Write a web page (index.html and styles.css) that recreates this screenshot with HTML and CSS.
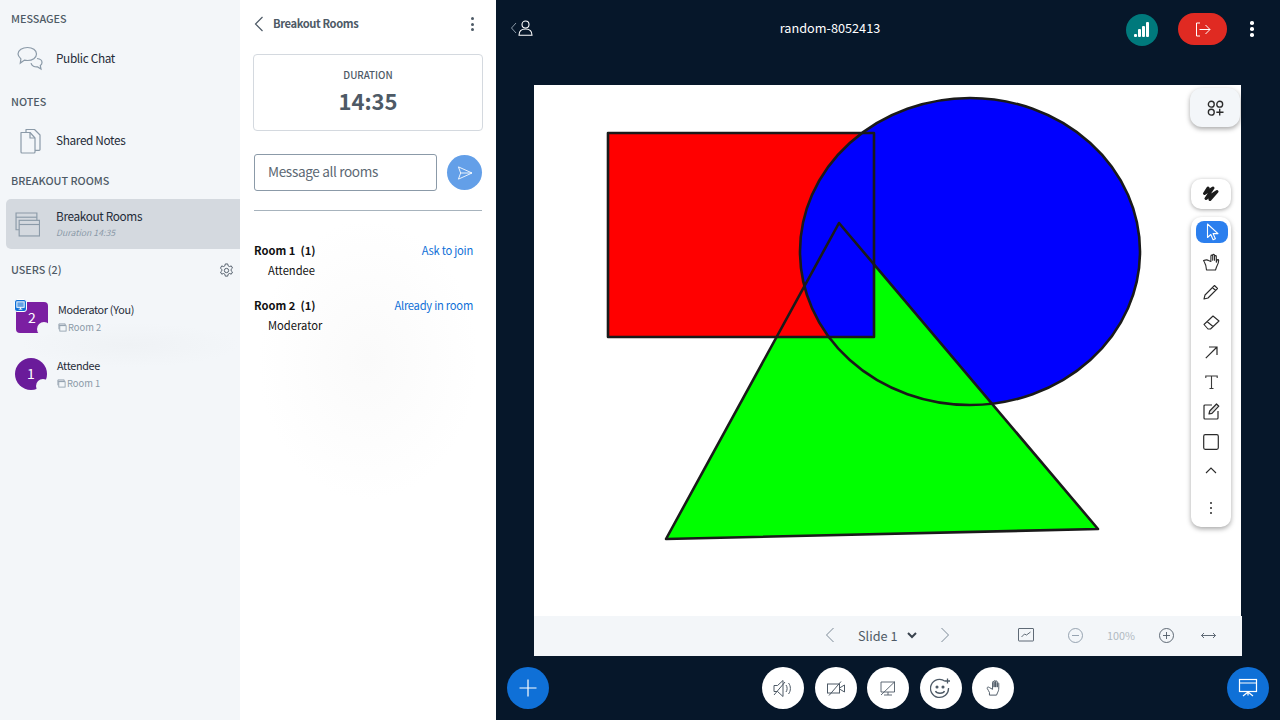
FILE: index.html
```html
<!DOCTYPE html>
<html lang="en">
<head>
    <meta charset="UTF-8">
    <meta name="viewport" content="width=device-width, initial-scale=1.0">
    <title>random-8052413</title>
    <link rel="stylesheet" href="styles.css">
</head>
<body>
    <aside class="sidebar">
        <h2 class="side-title">MESSAGES</h2>
        <div class="nav-item nav-chat">
            <svg class="nav-icon" viewBox="0 0 28 26" fill="none" stroke="#8b9aa8" stroke-width="1.2"><path d="M11.5 1.5c5 0 9 2.700 9 6.500s-4 6.500-9 6.500c-1 0-2-.1-3-.4l-4.200 3 .6-4.200C3 11 2 9.700 2 8c0-3.800 4.500-6.500 9.500-6.500z"/><path d="M21 12.500c3 .3 5 2 5 4 0 1.300-.6 2.300-1.700 3.100l.7 3.400-3.400-2.100c-2.900.4-6-1-6.600-3.700"/></svg>
            <span class="nav-text">Public Chat</span>
        </div>
        <h2 class="side-title title-notes">NOTES</h2>
        <div class="nav-item nav-notes">
            <svg class="nav-icon" viewBox="0 0 28 26" fill="none" stroke="#8b9aa8" stroke-width="1.200" stroke-linejoin="round"><path d="M5 4.500h9l5 5.500v14a1 1 0 0 1-1 1H6a1 1 0 0 1-1-1z"/><path d="M14 4.500V10h5"/><path d="M10 4V1.500h8.500L24 7v14.500a.8.8 0 0 1-.8.8H19"/></svg>
            <span class="nav-text">Shared Notes</span>
        </div>
        <h2 class="side-title title-breakout">BREAKOUT ROOMS</h2>
        <div class="nav-item nav-active">
            <svg class="nav-icon-wide" viewBox="0 0 24 24" fill="none" stroke="#8b9aa8" stroke-width="1.100"><path d="M4 17H1V1h20v7"/><path d="M1 5h20"/><rect x="4" y="8" width="19.500" height="15"/><path d="M4 12h19.500"/></svg>
            <div class="nav-text">
                <div>Breakout Rooms</div>
                <div class="nav-sub">Duration 14:35</div>
            </div>
        </div>
        <div class="users-head">
            <h2 class="side-title">USERS (2)</h2>
            <svg class="gear" viewBox="0 0 16 16" fill="none" stroke="#4e5a66" stroke-width="1"><circle cx="8" cy="8" r="2.300"/><path d="M6.700 1h2.600l.4 2 1.500.8 1.900-.7 1.300 2.300-1.500 1.300v1.600l1.500 1.300-1.300 2.300-1.900-.7-1.500.8-.4 2H6.700l-.4-2-1.500-.8-1.900.7-1.300-2.300 1.500-1.300V7.200L1.600 5.400l1.300-2.300 1.900.7 1.500-.8z"/></svg>
        </div>
        <div class="user user-mod">
            <div class="avatar avatar-square">2
                <span class="avatar-notch"></span>
                <span class="presenter-badge">
                    <svg viewBox="0 0 12 12" fill="none" stroke="#fff" stroke-width="1"><rect x="2" y="2" width="8" height="6" fill="#fff" fill-opacity=".35"/><path d="M4 10h4M6 8v2"/></svg>
                </span>
            </div>
            <div>
                <div class="user-name">Moderator (You)</div>
                <div class="user-room">
                    <svg viewBox="0 0 10 10" fill="none" stroke="#8b9aa8" stroke-width=".9"><path d="M1 7V1h7v2"/><rect x="2" y="3" width="7" height="6"/><path d="M1 2.500h7"/></svg>
                    Room 2
                </div>
            </div>
        </div>
        <div class="user user-att">
            <div class="avatar avatar-round">1
                <span class="avatar-notch"></span>
            </div>
            <div>
                <div class="user-name">Attendee</div>
                <div class="user-room">
                    <svg viewBox="0 0 10 10" fill="none" stroke="#8b9aa8" stroke-width=".9"><path d="M1 7V1h7v2"/><rect x="2" y="3" width="7" height="6"/><path d="M1 2.500h7"/></svg>
                    Room 1
                </div>
            </div>
        </div>
    </aside>

    <section class="panel">
        <div class="panel-head">
            <svg class="panel-back" viewBox="0 0 10 16" fill="none" stroke="#4e5a66" stroke-width="1.200"><path d="M8.500 1L1.500 8l7 7"/></svg>
            <span class="panel-title">Breakout Rooms</span>
            <span class="dots dots-dark"><i></i><i></i><i></i></span>
        </div>
        <div class="duration">
            <div class="duration-label">DURATION</div>
            <div class="duration-time">14:35</div>
        </div>
        <div class="message-row">
            <input class="message-input" type="text" placeholder="Message all rooms">
            <button class="send-btn">
                <svg viewBox="0 0 18 16" fill="none" stroke="#fff" stroke-width="1" stroke-linejoin="round"><path d="M1.500 1L17 8 1.500 15 4 8zM4 8h13"/></svg>
            </button>
        </div>
        <div class="room">
            <div class="room-line">
                <strong class="room-name">Room 1&nbsp; (1)</strong>
                <a class="room-link">Ask to join</a>
            </div>
            <div class="room-user">Attendee</div>
        </div>
        <div class="room">
            <div class="room-line">
                <strong class="room-name">Room 2&nbsp; (1)</strong>
                <a class="room-link">Already in room</a>
            </div>
            <div class="room-user">Moderator</div>
        </div>
    </section>

    <main class="main">
        <header class="topbar">
            <div class="top-left">
                <svg width="8" height="12" viewBox="0 0 8 12" fill="none" stroke="#8b9aa8" stroke-width="1"><path d="M6 1L1.500 6 6 11"/></svg>
                <svg width="15" height="16" viewBox="0 0 15 16" fill="none" stroke="#fff" stroke-width="1.100"><circle cx="7.500" cy="4.500" r="3.500"/><path d="M1 15.300c0-4 2-6.300 6.500-6.300s6.500 2.300 6.500 6.300z"/></svg>
            </div>
            <div class="meeting-name">random-8052413</div>
            <div class="top-right">
                <span class="signal"><i class="bar1"></i><i class="bar2"></i><i class="bar3"></i><i class="bar4"></i></span>
                <span class="leave">
                    <svg width="16" height="15" viewBox="0 0 16 15" fill="none" stroke="#fff" stroke-width="1"><path d="M5 1H1.500v13H5M4.500 7.500H15M10.500 3L15 7.500 10.500 12"/></svg>
                </span>
                <span class="dots dots-light"><i></i><i></i><i></i></span>
            </div>
        </header>

        <div class="stage">
            <div class="board">
                <svg class="drawing" viewBox="0 0 707 530" width="707" height="530">
                    <rect x="74" y="48" width="266" height="204" fill="#f00"/>
                    <ellipse cx="436" cy="166.500" rx="170" ry="153.500" fill="#00f"/>
                    <polygon points="340,179.400 564,444 132,454 242.600,252 340,252" fill="#0f0"/>
                    <g fill="none" stroke="#1a1a1a" stroke-width="2.600" stroke-linejoin="round">
                        <rect x="74" y="48" width="266" height="204"/>
                        <ellipse cx="436" cy="166.500" rx="170" ry="153.500"/>
                        <polygon points="305,138 564,444 132,454"/>
                    </g>
                </svg>
                <div class="tools">
                    <div class="tool-style">
                        <svg width="17" height="16" viewBox="0 0 20 19" fill="none" stroke="#2b2b2b" stroke-width="1.600"><circle cx="5" cy="5" r="3.500"/><circle cx="15" cy="5" r="3.500"/><circle cx="5" cy="14.500" r="3.500"/><path d="M15 10.500v8M11 14.500h8.500"/></svg>
                    </div>
                    <div class="tool-scribble">
                        <svg width="18" height="16" viewBox="0 0 18 16" fill="none" stroke="#1c1c1c" stroke-width="3" stroke-linecap="round" stroke-linejoin="round"><path d="M6 2L2.500 7.500 11 2 4 12.500 15 5.500 8 13.500"/></svg>
                    </div>
                    <div class="toolbar">
                        <div class="tool tool-active">
                            <svg width="13" height="18" viewBox="0 0 13 18" fill="none" stroke="#fff" stroke-width="1.100" stroke-linejoin="round"><path d="M1.500 1v13.500l3.300-3 2.300 5.300 2.300-1-2.300-5.200H12z"/></svg>
                        </div>
                        <div class="tool">
                            <svg width="18" height="18" viewBox="0 0 18 18" fill="none" stroke="#2b2b2b" stroke-width="1.100" stroke-linejoin="round"><path d="M4.500 17h9l1-3c1-2 2.200-4 2.200-6.500 0-1.200-1.500-1.200-1.800 0l-.6 1.800V3.500c0-1.200-1.600-1.200-1.800 0v3.800-5c0-1.300-1.700-1.300-1.800 0v5-4.300c0-1.200-1.700-1.200-1.800 0v5.500L6.500 7.500C5 6.300 3 7 1.500 7.500c1 1.500 1.500 3 2.300 5z"/></svg>
                        </div>
                        <div class="tool">
                            <svg width="16" height="16" viewBox="0 0 16 16" fill="none" stroke="#2b2b2b" stroke-width="1.100" stroke-linejoin="round"><path d="M1 15l1-4L11.500 1.500l3 3L5 14zM9.500 3.500l3 3"/></svg>
                        </div>
                        <div class="tool">
                            <svg width="17" height="15" viewBox="0 0 17 15" fill="none" stroke="#2b2b2b" stroke-width="1.100" stroke-linejoin="round"><path d="M1 9.500L10 1l6 5-8.500 8H5zM4 6.500l6 5"/></svg>
                        </div>
                        <div class="tool">
                            <svg width="13" height="13" viewBox="0 0 13 13" fill="none" stroke="#2b2b2b" stroke-width="1.200"><path d="M.8 12.200L12 1M4 1h8v8"/></svg>
                        </div>
                        <div class="tool">
                            <svg width="13" height="14" viewBox="0 0 13 14" fill="none" stroke="#3a3a3a" stroke-width="1.100"><path d="M.8 3V1h11.400v2M6.500 1v12.500M4.500 13.500h4"/></svg>
                        </div>
                        <div class="tool tool-up-1">
                            <svg width="17" height="17" viewBox="0 0 17 17" fill="none" stroke="#2b2b2b" stroke-width="1.200" stroke-linejoin="round"><path d="M9 2H2a1 1 0 0 0-1 1v12a1 1 0 0 0 1 1h12a1 1 0 0 0 1-1V8"/><path d="M6 11l.7-3L13.500 1l2.300 2.200L9 10.300z" fill="#2b2b2b" fill-opacity=".15"/></svg>
                        </div>
                        <div class="tool">
                            <svg width="16" height="16" viewBox="0 0 16 16" fill="none" stroke="#2b2b2b" stroke-width="1.200"><rect x=".7" y=".7" width="14.600" height="14.600" rx="1.500"/></svg>
                        </div>
                        <div class="tool tool-up-2">
                            <svg width="12" height="7" viewBox="0 0 12 7" fill="none" stroke="#2b2b2b" stroke-width="1.100"><path d="M1 6l5-5 5 5"/></svg>
                        </div>
                        <div class="tool tool-more"><span class="dots dots-small"><i></i><i></i><i></i></span></div>
                    </div>
                </div>
            </div>
            <div class="slidebar">
                <span class="sb-icon sb-prev">
                    <svg width="10" height="16" viewBox="0 0 10 16" fill="none" stroke="#7c8a97" stroke-width="1"><path d="M8.500 1L1.500 8l7 7"/></svg>
                </span>
                <span class="sb-slide">Slide 1
                    <svg width="10" height="7" viewBox="0 0 10 7" fill="none" stroke="#39434e" stroke-width="2"><path d="M1 1l4 4 4-4"/></svg>
                </span>
                <span class="sb-icon sb-next">
                    <svg width="10" height="16" viewBox="0 0 10 16" fill="none" stroke="#7c8a97" stroke-width="1"><path d="M1.500 1l7 7-7 7"/></svg>
                </span>
                <span class="sb-icon sb-chart">
                    <svg width="16" height="14" viewBox="0 0 16 14" fill="none" stroke="#4e5a66" stroke-width=".9"><rect x=".5" y=".5" width="15" height="12.500" rx=".5"/><path d="M3.500 9l3-3 2 1 4-3"/></svg>
                </span>
                <span class="sb-icon sb-minus">
                    <svg width="15" height="15" viewBox="0 0 15 15" fill="none" stroke="#8b9aa8" stroke-width=".9"><circle cx="7.500" cy="7.500" r="7"/><path d="M4 7.500h7"/></svg>
                </span>
                <span class="sb-zoom">100%</span>
                <span class="sb-icon sb-plus">
                    <svg width="15" height="15" viewBox="0 0 15 15" fill="none" stroke="#4e5a66" stroke-width=".9"><circle cx="7.500" cy="7.500" r="7"/><path d="M4 7.500h7M7.500 4v7"/></svg>
                </span>
                <span class="sb-icon sb-fit">
                    <svg width="15" height="7" viewBox="0 0 15 7" fill="none" stroke="#4e5a66" stroke-width=".9"><path d="M.5 3.500h14M3 1L.5 3.500 3 6M12 1l2.500 2.500L12 6"/></svg>
                </span>
            </div>
        </div>

        <footer class="actions">
            <button class="round-btn blue-btn">
                <svg width="18" height="18" viewBox="0 0 18 18" stroke="#fff" stroke-width="1.200"><path d="M.5 9h17M9 .5v17"/></svg>
            </button>
            <div class="action-group">
                <button class="round-btn">
                    <svg width="20" height="19" viewBox="0 0 20 19" fill="none" stroke="#4e5a66" stroke-width="1"><path d="M1 6.500h3.500L10 1.500v16l-5.500-5H1zM1 16L12 3M13 6c1.500 2 1.500 5 0 7M15.500 4c2.500 3 2.500 8 0 11"/></svg>
                </button>
                <button class="round-btn">
                    <svg width="18" height="15" viewBox="0 0 18 15" fill="none" stroke="#4e5a66" stroke-width="1"><rect x=".5" y="3" width="12" height="9"/><path d="M12.500 7l5-3v7l-5-3M2 14.500L14 .5"/></svg>
                </button>
                <button class="round-btn">
                    <svg width="16" height="15" viewBox="0 0 16 15" fill="none" stroke="#4e5a66" stroke-width=".9"><path d="M1 1h13.500v10H1zM4 14h8M8 11v3M1 14L15 .5"/></svg>
                </button>
                <button class="round-btn">
                    <svg width="21" height="21" viewBox="0 0 21 21" fill="none" stroke="#4e5a66" stroke-width="1.300"><path d="M15 3.300A9 9 0 1 0 18.500 10"/><circle cx="7" cy="9" r=".9" fill="#4e5a66"/><circle cx="13" cy="9" r=".9" fill="#4e5a66"/><path d="M5.500 13c1 3 8 3 9 0M17.500 .5v5M15 3h5"/></svg>
                </button>
                <button class="round-btn">
                    <svg width="16" height="18" viewBox="0 0 18 18" fill="none" stroke="#4e5a66" stroke-width="1.100" stroke-linejoin="round"><path d="M5 17h8l1-2.500c.8-1.500 1.500-3 1.500-5.500V4c0-1-1.500-1-1.700 0v4-6c0-1.200-1.700-1.200-1.800 0v6V1.500c0-1.200-1.800-1.200-1.800 0V8 2.500c0-1.200-1.700-1.200-1.700 0v8L5 8.500C3.500 7.300 2 8.300 2.500 9.500c1 1.300 1.500 3 2.500 4.500z"/></svg>
                </button>
            </div>
            <button class="round-btn blue-btn push-right">
                <svg width="20" height="20" viewBox="0 0 20 20" fill="none" stroke="#fff" stroke-width="1.200"><rect x="1.500" y="1.500" width="17" height="12"/><path d="M1.500 5h17M10 13.500v4M10 14l-5 4M10 14l5 4"/></svg>
            </button>
        </footer>
    </main>
</body>
</html>
```

FILE: styles.css
```css
* {
    box-sizing: border-box;
}

body {
    margin: 0;
    width: 1280px;
    height: 720px;
    overflow: hidden;
    display: flex;
    font-family: "Noto Sans CJK SC", "Noto Sans", sans-serif;
    font-size: 11.800px;
    letter-spacing: -0.350px;
    color: #1f2b38;
    background-color: #06172a;
}

/* sidebar */
.sidebar {
    width: 240px;
    padding-top: 1px;
    background-color: #f3f6f9;
    background-image: radial-gradient(ellipse 110px 22px at 130px 345px, #eff2f5, #f3f6f9);
}

.side-title {
    margin: 0;
    padding-left: 11px;
    height: 36px;
    line-height: 35px;
    font-size: 10.800px;
    font-weight: 500;
    letter-spacing: 0;
    color: #4e5a66;
}

.title-notes {
    margin-top: 4px;
}

.title-breakout {
    margin-top: 2px;
}

.nav-item {
    display: flex;
    align-items: center;
    height: 40px;
    padding-left: 16px;
    line-height: 18px;
}

.nav-text {
    padding-bottom: 2px;
}

.nav-chat {
    margin-top: 1px;
    height: 42px;
}

.nav-notes {
    margin-top: 1px;
}

.nav-icon {
    width: 28px;
    height: 26px;
    margin-right: 12px;
}

.nav-active {
    height: 50px;
    margin-left: 6px;
    padding-left: 9px;
    background-color: #d4d9df;
    border-radius: 5px 0 0 5px;
}

.nav-icon-wide {
    width: 25px;
    height: 25px;
    margin-right: 16px;
}

.nav-sub {
    font-size: 8.700px;
    font-style: italic;
    letter-spacing: 0;
    line-height: 15px;
    color: #8b9aa8;
}

.users-head {
    display: flex;
    justify-content: space-between;
    align-items: center;
    margin-top: 3px;
    padding-right: 6px;
}

.gear {
    width: 15px;
    height: 15px;
}

.user {
    display: flex;
    position: relative;
}

.user-mod {
    margin-top: 14px;
    padding-left: 16px;
    height: 56px;
}

.user-att {
    padding-left: 15px;
}

.avatar {
    position: relative;
    width: 32px;
    height: 32px;
    margin-right: 10px;
    text-align: center;
    line-height: 31px;
    font-size: 14px;
    letter-spacing: 0;
    color: #fff;
}

.avatar-square {
    background-color: #7b1fa2;
    border-radius: 4px;
    height: 31px;
    line-height: 30px;
}

.avatar-round {
    background-color: #6a1b9a;
    border-radius: 50%;
}

.avatar-notch {
    position: absolute;
    right: -3px;
    bottom: -3px;
    width: 14px;
    height: 14px;
    border-radius: 50%;
    background-color: #f3f6f9;
}

.presenter-badge {
    position: absolute;
    left: -2px;
    top: -3px;
    width: 13px;
    height: 13px;
    display: flex;
    border-radius: 3px;
    background-color: #0f70d7;
    border: 1px solid #fff;
}

.user-name {
    margin: -1px 0 1px;
    font-size: 10.800px;
    letter-spacing: -0.300px;
    line-height: 17px;
}

.user-room {
    display: flex;
    align-items: center;
    gap: 1px;
    font-size: 9.400px;
    letter-spacing: 0;
    line-height: 17px;
    color: #8b9aa8;
}

.user-room svg {
    width: 9px;
    height: 9px;
}

/* breakout panel */
.panel {
    width: 256px;
    padding: 0 13px 0 14px;
    background-color: #fff;
    background-image: radial-gradient(ellipse 110px 140px at 128px 360px, #fafafa, #fff);
}

.panel-head {
    display: flex;
    align-items: center;
    height: 48px;
}

.panel-back {
    width: 10px;
    height: 16px;
    margin-right: 9px;
}

.panel-title {
    flex: 1;
    padding-bottom: 2px;
    font-size: 11.200px;
    font-weight: 700;
    letter-spacing: -0.400px;
    color: #4e5a66;
}

.dots {
    display: flex;
    flex-direction: column;
    align-items: center;
}

.dots i {
    display: block;
    border-radius: 50%;
}

.dots-dark {
    gap: 2.500px;
    margin-right: 9px;
}

.dots-dark i {
    width: 3px;
    height: 3px;
    background-color: #4e5a66;
}

.duration {
    margin: 6px 0 0 -1px;
    width: 230px;
    height: 77px;
    padding-top: 12px;
    border: 1px solid #d4d9df;
    border-radius: 4px;
    text-align: center;
    color: #4e5a66;
    letter-spacing: 0;
}

.duration-label {
    font-size: 9.800px;
    font-weight: 500;
    line-height: 16px;
}

.duration-time {
    font-size: 22px;
    font-weight: 700;
    line-height: 34px;
}

.message-row {
    display: flex;
    align-items: center;
    gap: 10px;
    margin: 23px 0 29px;
    padding-bottom: 19px;
    width: 228px;
    border-bottom: 1px solid #a7b3bd;
}

.message-input {
    width: 183px;
    height: 37px;
    padding: 0 13px 4px;
    border: 1px solid #8b9aa8;
    border-radius: 3px;
    font-family: inherit;
    font-size: 13.600px;
    letter-spacing: -0.350px;
}

.message-input::placeholder {
    color: #5c6873;
    opacity: 1;
}

.send-btn {
    display: flex;
    align-items: center;
    justify-content: center;
    width: 35px;
    height: 35px;
    padding: 0;
    border: none;
    border-radius: 50%;
    background-color: #639fe8;
}

.send-btn svg {
    width: 16px;
    height: 14px;
}

.room {
    margin-bottom: 15px;
    color: #111;
}

.room-line {
    display: flex;
    justify-content: space-between;
    padding-right: 10px;
    line-height: 20px;
}

.room-name {
    font-size: 11.200px;
    font-weight: 700;
    letter-spacing: 0;
}

.room-link {
    font-size: 11.200px;
    letter-spacing: -0.250px;
    color: #0f70d7;
}

.room-user {
    padding-left: 14px;
    font-size: 11.200px;
    letter-spacing: 0;
    line-height: 20px;
}

/* presentation area */
.main {
    flex: 1;
    display: flex;
    flex-direction: column;
    min-width: 0;
}

.topbar {
    display: flex;
    height: 85px;
    color: #fff;
}

.top-left {
    display: flex;
    align-items: center;
    width: 38px;
    height: 56px;
    padding-left: 14px;
    flex-shrink: 0;
}

.meeting-name {
    flex: 1;
    height: 56px;
    line-height: 56px;
    text-align: center;
    font-size: 12.700px;
    letter-spacing: 0;
}

.top-right {
    display: flex;
    align-items: flex-start;
    width: 154px;
    padding-top: 13px;
    flex-shrink: 0;
}

.signal {
    display: flex;
    align-items: flex-end;
    gap: 1px;
    width: 32px;
    height: 32px;
    padding: 0 0 9px 8px;
    margin-top: 1px;
    border-radius: 50%;
    background-color: #00797c;
}

.signal i {
    display: block;
    width: 3px;
    background-color: #fff;
    border-radius: 1px;
}

.bar1 { height: 3px; }
.bar2 { height: 8px; }
.bar3 { height: 11px; }
.bar4 { height: 15px; }

.leave {
    display: flex;
    align-items: center;
    justify-content: center;
    width: 49px;
    height: 32px;
    margin-left: 20px;
    border-radius: 16px;
    background-color: #e02a22;
}

.dots-light {
    gap: 2.500px;
    margin: 8px 0 0 23px;
}

.dots-light i {
    width: 3.500px;
    height: 3.500px;
    background-color: #fff;
}

.stage {
    margin-left: 38px;
    width: 708px;
    height: 571px;
}

.board {
    position: relative;
    width: 707px;
    height: 531px;
    background-color: #fff;
}

.drawing {
    display: block;
}

/* whiteboard tools sit over the drawing */
.tools {
    position: absolute;
    top: 3px;
    right: 1px;
    width: 50px;
    display: flex;
    flex-direction: column;
}

.tool-style {
    display: flex;
    align-items: center;
    justify-content: center;
    width: 50px;
    height: 39px;
    border-radius: 12px;
    background-color: #f3f6f9;
    box-shadow: 0 2px 5px rgba(0, 0, 0, 0.35);
}

.tool-scribble {
    display: flex;
    align-items: center;
    justify-content: center;
    width: 40px;
    height: 30px;
    margin: 52px 0 0 1px;
    border-radius: 10px;
    background-color: #fff;
    box-shadow: 0 1px 4px rgba(0, 0, 0, 0.35);
}

.toolbar {
    width: 40px;
    height: 310px;
    margin: 8px 0 0 1px;
    padding: 4px 3px 0 5px;
    border-radius: 10px;
    background-color: #fff;
    box-shadow: 0 2px 5px rgba(0, 0, 0, 0.35);
}

.tool {
    display: flex;
    align-items: center;
    justify-content: center;
    height: 30px;
    padding-right: 2px;
}

.tool-up-1 {
    padding-bottom: 2px;
}

.tool-up-2 {
    padding-bottom: 4px;
}

.tool-active {
    height: 22px;
    margin-bottom: 4px;
    padding-right: 0;
    border-radius: 8px;
    background-color: #2b7fee;
}

.tool-more {
    margin-top: 6px;
}

.dots-small {
    gap: 3px;
}

.dots-small i {
    width: 2px;
    height: 2px;
    background-color: #2b2b2b;
}

.slidebar {
    display: flex;
    align-items: center;
    height: 40px;
    padding-bottom: 2px;
    background-color: #f3f6f9;
    color: #4e5a66;
}

.sb-icon {
    display: flex;
    justify-content: center;
    width: 20px;
}

.sb-prev { margin-left: 286px; }
.sb-next { margin-left: 15px; }
.sb-chart { margin-left: 61px; }
.sb-minus { margin-left: 29px; }
.sb-plus { margin-left: 15px; }
.sb-fit { margin-left: 22px; }

.sb-slide {
    display: flex;
    align-items: center;
    gap: 10px;
    width: 62px;
    margin-left: 18px;
    font-size: 12.700px;
    letter-spacing: 0;
    white-space: nowrap;
}

.sb-zoom {
    width: 40px;
    margin-left: 16px;
    text-align: center;
    font-size: 10.800px;
    letter-spacing: 0;
    color: #b1b9c1;
}

.actions {
    display: flex;
    align-items: center;
    flex: 1;
    padding: 0 11px;
}

.action-group {
    display: flex;
    gap: 10.500px;
    margin-left: 213px;
}

.round-btn {
    display: flex;
    align-items: center;
    justify-content: center;
    width: 42px;
    height: 42px;
    padding: 0;
    border: none;
    border-radius: 50%;
    background-color: #fff;
}

.blue-btn {
    background-color: #0f70d7;
}

.push-right {
    margin-left: auto;
}
```
